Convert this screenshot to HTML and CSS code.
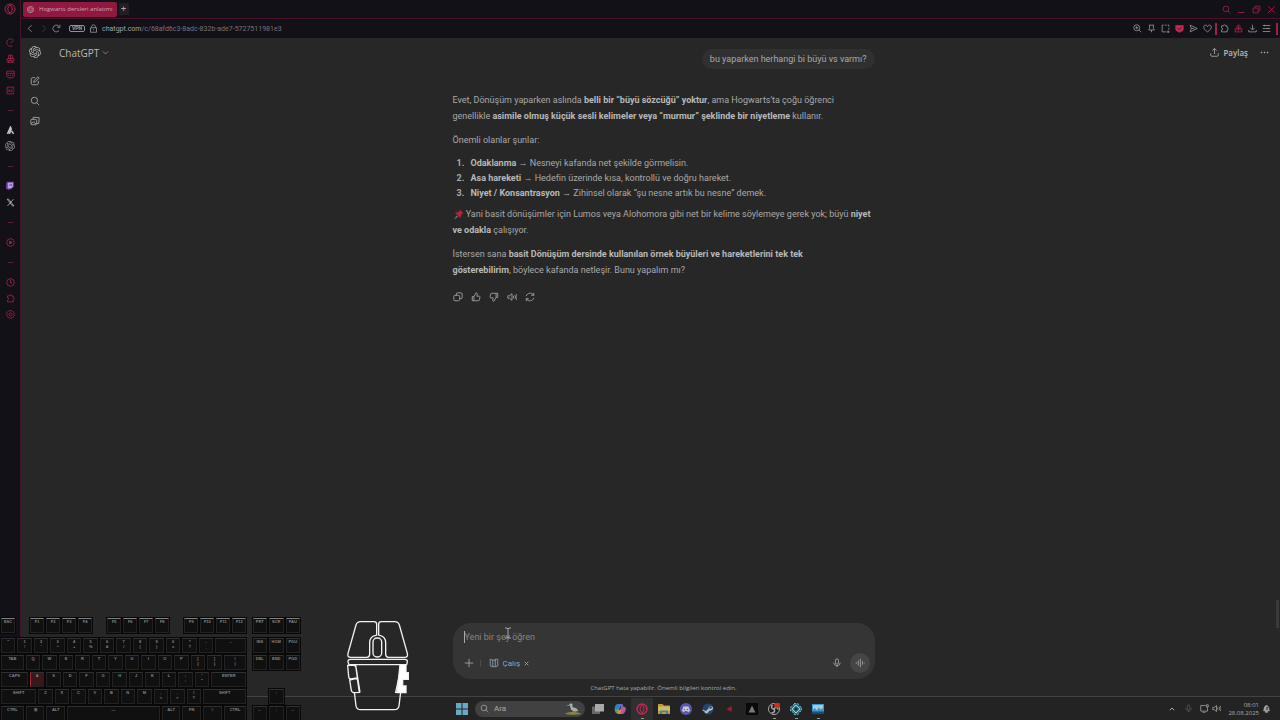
FILE: index.html
```
<!DOCTYPE html>
<html lang="tr">
<head>
  <meta charset="UTF-8">
  <meta name="viewport" content="width=device-width, initial-scale=1.0">
  <title>Hogwarts dersleri anlatımı</title>
  <link rel="stylesheet" href="styles.css">
</head>
<body>
  <!-- Shared icons -->
  <svg class="sprite" aria-hidden="true">
    <symbol id="gpt" viewBox="0 0 24 24"><path fill="currentColor" stroke="none" d="M22.2819 9.8211a5.9847 5.9847 0 0 0-.5157-4.9108 6.0462 6.0462 0 0 0-6.5098-2.9A6.0651 6.0651 0 0 0 4.9807 4.1818a5.9847 5.9847 0 0 0-3.9977 2.9 6.0462 6.0462 0 0 0 .7427 7.0966 5.98 5.98 0 0 0 .511 4.9107 6.051 6.051 0 0 0 6.5146 2.9001A5.9847 5.9847 0 0 0 13.2599 24a6.0557 6.0557 0 0 0 5.7718-4.2058 5.9894 5.9894 0 0 0 3.9977-2.9001 6.0557 6.0557 0 0 0-.7475-7.0729zm-9.022 12.6081a4.4755 4.4755 0 0 1-2.8764-1.0408l.1419-.0804 4.7783-2.7582a.7948.7948 0 0 0 .3927-.6813v-6.7369l2.02 1.1686a.071.071 0 0 1 .038.052v5.5826a4.504 4.504 0 0 1-4.4945 4.4944zm-9.6607-4.1254a4.4708 4.4708 0 0 1-.5346-3.0137l.142.0852 4.783 2.7582a.7712.7712 0 0 0 .7806 0l5.8428-3.3685v2.3324a.0804.0804 0 0 1-.0332.0615L9.74 19.9502a4.4992 4.4992 0 0 1-6.1408-1.6464zM2.3408 7.8956a4.485 4.485 0 0 1 2.3655-1.9728V11.6a.7664.7664 0 0 0 .3879.6765l5.8144 3.3543-2.0201 1.1685a.0757.0757 0 0 1-.071 0l-4.8303-2.7865A4.504 4.504 0 0 1 2.3408 7.872zm16.5963 3.8558L13.1038 8.364 15.1192 7.2a.0757.0757 0 0 1 .071 0l4.8303 2.7913a4.4944 4.4944 0 0 1-.6765 8.1042v-5.6772a.79.79 0 0 0-.407-.667zm2.0107-3.0231l-.142-.0852-4.7735-2.7818a.7759.7759 0 0 0-.7854 0L9.409 9.2297V6.8974a.0662.0662 0 0 1 .0284-.0615l4.8303-2.7866a4.4992 4.4992 0 0 1 6.6802 4.66zM8.3065 12.863l-2.02-1.1638a.0804.0804 0 0 1-.038-.0567V6.0742a4.4992 4.4992 0 0 1 7.3757-3.4537l-.142.0805L8.704 5.459a.7948.7948 0 0 0-.3927.6813zm1.0976-2.3654l2.602-1.4998 2.6069 1.4998v2.9994l-2.5974 1.4997-2.6067-1.4997Z"/></symbol>
    <symbol id="opera" viewBox="0 0 24 24"><circle cx="12" cy="12" r="10"/><ellipse cx="12" cy="12" rx="4.500" ry="7.500"/></symbol>
    <symbol id="search" viewBox="0 0 24 24"><circle cx="10.500" cy="10.500" r="7.500"/><path d="M16 16l6 6"/></symbol>
    <symbol id="puzzle" viewBox="0 0 24 24"><path d="M4 5h5c0-4 6-4 6 0h4v5c4 0 4 6 0 6v5H4v-5c4 0 4-6 0-6z"/></symbol>
    <symbol id="mic" viewBox="0 0 24 24"><rect x="8.500" y="2" width="7" height="13" rx="3.500"/><path d="M4.500 11c0 10 15 10 15 0M12 18.500V22"/></symbol>
    <symbol id="speaker" viewBox="0 0 24 24"><path d="M2 9v6h4l6 5V4L6 9zM15.500 9v6M19 7.500c2 3 2 6 0 9M22 5c3 5 3 9 0 14"/></symbol>
    <symbol id="thumb" viewBox="0 0 24 24"><path d="M3 11h4v10H3zM7 11l5-9c3 0 3.500 2 3 4l-1 4h5c2 0 3 1 2.500 3l-1.500 6c-.500 1.500-1 2-3 2H7"/></symbol>
  </svg>

  <div class="browser">
    <nav class="opera-bar" aria-label="Opera">
      <a href="#" class="opera-logo"><svg class="icon-l"><use href="#opera"/></svg></a>
      <a href="#"><svg class="icon-s" viewBox="0 0 24 24"><path d="M17 21c-10 4-18-5-14-13 4-7 13-7 17-2M12 13l8-6"/></svg></a>
      <a href="#"><svg class="icon-s" viewBox="0 0 24 24"><path d="M7 12V3h10v9M3 12h18v6H3zM7 18v4M17 18v4M2 22h20M12 3v15"/></svg></a>
      <a href="#"><svg class="icon-s" viewBox="0 0 24 24"><path d="M2 3h20v13l-4 5H6l-4-5zM3 9h18M7 13v3M12 13v4M17 13v3"/></svg></a>
      <a href="#"><svg class="icon-s" viewBox="0 0 24 24"><path d="M20 9V3H3v18h17v-4M8 8v8l4-4 4 4V8M20 13h3"/></svg></a>
      <hr>
      <a href="#" class="tile"><svg class="icon-s" viewBox="0 0 24 24"><path d="M4 21L12 3l2 5-5 13M15 13l5 8" stroke-width="4"/></svg></a>
      <a href="#" class="grey"><svg class="icon-m"><use href="#gpt"/></svg></a>
      <hr>
      <a href="#"><svg class="icon-m filled" viewBox="0 0 24 24"><path fill="#7748b8" d="M5 2h16v12l-6 6h-4l-3 3v-3H3V6z"/><path fill="#b9a0d8" d="M7 4h12v9l-4 4h-3l-3 2v-2H7z"/><path fill="#6440a0" d="M11 7h2v5h-2zM15 7h2v5h-2z"/></svg></a>
      <a href="#" class="tile"><svg class="icon-s" viewBox="0 0 24 24"><path d="M3 3h4l14 18h-4zM20 3L4 21"/></svg></a>
      <hr>
      <a href="#"><svg class="icon-s" viewBox="0 0 24 24"><circle cx="12" cy="12" r="10"/><path d="M10 8v8l6-4z" fill="currentColor"/></svg></a>
      <hr>
      <a href="#"><svg class="icon-s" viewBox="0 0 24 24"><circle cx="12" cy="12" r="10"/><path d="M12 5v8h4"/></svg></a>
      <a href="#"><svg class="icon-s"><use href="#puzzle"/></svg></a>
      <a href="#"><svg class="icon-s" viewBox="0 0 24 24"><path d="M8 2h8l5 5 1 8-5 6-5 1-6-2-4-6V7z"/><circle cx="12" cy="12" r="4"/></svg></a>
    </nav>

    <div class="window">
      <div class="tab-bar">
        <a href="#" class="tab"><svg class="icon-xs"><use href="#gpt"/></svg>Hogwarts dersleri anlatımı</a>
        <button class="new-tab" aria-label="Yeni sekme">+</button>
        <div class="window-buttons">
          <button aria-label="Sekme ara"><svg class="icon-s"><use href="#search"/></svg></button>
          <button aria-label="Küçült"><svg class="icon-s" viewBox="0 0 24 24"><path d="M2 20h18"/></svg></button>
          <button aria-label="Pencere"><svg class="icon-s" viewBox="0 0 24 24"><path d="M3 8h13v13H3zM8 7V3h13v13h-4"/></svg></button>
          <button aria-label="Kapat"><svg class="icon-s" viewBox="0 0 24 24"><path d="M3 3l18 18M21 3L3 21"/></svg></button>
        </div>
      </div>

      <div class="address-bar">
        <button aria-label="Geri"><svg class="icon-s" viewBox="0 0 24 24"><path d="M15 3l-9 9 9 9"/></svg></button>
        <button class="off" aria-label="İleri"><svg class="icon-s" viewBox="0 0 24 24"><path d="M9 3l9 9-9 9"/></svg></button>
        <button aria-label="Yenile"><svg class="icon-s" viewBox="0 0 24 24"><path d="M19 17A9 9 0 1 1 19 7M21 2v7h-7"/></svg></button>
        <span class="vpn">VPN</span>
        <svg class="icon-s" viewBox="0 0 24 24"><path d="M4 10h16v12H4zM7 10V6c0-5 10-5 10 0v4M12 14v3"/></svg>
        <a href="#" class="url">chatgpt.com<span>/c/68afd6c3-8adc-832b-ade7-5727511981e3</span></a>
        <div class="extensions">
          <button aria-label="Yakınlaştır"><svg class="icon-s" viewBox="0 0 24 24"><circle cx="10" cy="10" r="8"/><path d="M16 16l6 6M10 6v8M6 10h8"/></svg></button>
          <button aria-label="Sabitle"><svg class="icon-s" viewBox="0 0 24 24"><path d="M5 3h14M7 3v9l-3 4h16l-3-4V3M12 16v6"/></svg></button>
          <button aria-label="Anlık görüntü"><svg class="icon-s" viewBox="0 0 24 24"><path d="M3 3h4M10 3h5M18 3h3v4M21 10v5M3 3v18h10M15 21h8M19 17v7"/></svg></button>
          <button class="red" aria-label="Koruma"><svg class="icon-s" viewBox="0 0 24 24"><path fill="currentColor" d="M2 4h20v10c0 4-6 6-10 8-4-2-10-4-10-8z"/><path stroke="#14131a" d="M7 11l4 4 6-6"/></svg></button>
          <button aria-label="Gönder"><svg class="icon-s" viewBox="0 0 24 24"><path d="M3 3l19 9-19 9 3-9zM6 12h8"/></svg></button>
          <button aria-label="Favori"><svg class="icon-s" viewBox="0 0 24 24"><path d="M12 21C4 15 2 12 2 8c0-6 8-7 10-1 2-6 10-5 10 1 0 4-2 7-10 13z"/></svg></button>
          <span class="bar"></span>
          <button aria-label="Uzantılar"><svg class="icon-s"><use href="#puzzle"/></svg></button>
          <button class="red" aria-label="Kilit"><svg class="icon-s" viewBox="0 0 24 24"><path d="M3 13h18v8H3zM8 12V5c0-3 8-3 8 0v7M12 6v12"/></svg></button>
          <button aria-label="İndirilenler"><svg class="icon-s" viewBox="0 0 24 24"><path d="M12 2v13M6 10l6 6 6-6M2 16v5h20v-5"/></svg></button>
          <button aria-label="Ayarlar"><svg class="icon-s" viewBox="0 0 24 24"><path d="M2 4h20M2 12h20M2 20h20M7 2v4M16 10v4"/></svg></button>
          <span class="bar"></span>
        </div>
      </div>

      <div class="page">
        <aside class="rail">
          <a href="#" aria-label="Ana sayfa"><svg class="icon-l"><use href="#gpt"/></svg></a>
          <a href="#" aria-label="Yeni sohbet"><svg class="icon-m" viewBox="0 0 24 24"><path d="M12 4H7c-3 0-4 1-4 4v9c0 3 1 4 4 4h9c3 0 4-1 4-4v-5M9 15l1-4 9-9 3 3-9 9z"/></svg></a>
          <a href="#" aria-label="Sohbet ara"><svg class="icon-m"><use href="#search"/></svg></a>
          <a href="#" aria-label="Kitaplık"><svg class="icon-m" viewBox="0 0 24 24"><rect x="2" y="8" width="14" height="13" rx="3"/><path d="M7 8l1-5 14 1-1 14h-5M3 19l5-5 7 6M11 12h1"/></svg></a>
        </aside>

        <main>
          <header>
            <button class="model">ChatGPT <svg class="icon-xs" viewBox="0 0 24 24"><path d="M3 8l9 9 9-9"/></svg></button>
            <button class="share"><svg class="icon-s" viewBox="0 0 24 24"><path d="M12 16V2M6 7l6-6 6 6M2 14v5c0 2 1 3 3 3h14c2 0 3-1 3-3v-5"/></svg>Paylaş</button>
            <button class="more" aria-label="Diğer"><svg class="icon-s" viewBox="0 0 24 24"><path fill="currentColor" d="M3 11h2v2H3zM11 11h2v2h-2zM19 11h2v2h-2z"/></svg></button>
          </header>

          <div class="thread">
            <p class="user-message">bu yaparken herhangi bi büyü vs varmı?</p>

            <article>
              <p>Evet, Dönüşüm yaparken aslında <strong>belli bir “büyü sözcüğü” yoktur</strong>, ama Hogwarts'ta çoğu öğrenci<br>genellikle <strong>asimile olmuş küçük sesli kelimeler veya “murmur” şeklinde bir niyetleme</strong> kullanır.</p>
              <p>Önemli olanlar şunlar:</p>
              <ol>
                <li><strong>Odaklanma</strong> → Nesneyi kafanda net şekilde görmelisin.</li>
                <li><strong>Asa hareketi</strong> → Hedefin üzerinde kısa, kontrollü ve doğru hareket.</li>
                <li><strong>Niyet / Konsantrasyon</strong> → Zihinsel olarak “şu nesne artık bu nesne” demek.</li>
              </ol>
              <p><svg class="pin" viewBox="0 0 24 24"><path fill="#777" d="M8 14l3 3-9 6z"/><path fill="#b52339" d="M15 1l8 8-3 1-3 5v5L4 8l6-1 5-3z"/></svg> Yani basit dönüşümler için Lumos veya Alohomora gibi net bir kelime söylemeye gerek yok; büyü <strong>niyet<br>ve odakla</strong> çalışıyor.</p>
              <p>İstersen sana <strong>basit Dönüşüm dersinde kullanılan örnek büyüleri ve hareketlerini tek tek<br>gösterebilirim</strong>, böylece kafanda netleşir. Bunu yapalım mı?</p>
            </article>

            <div class="actions">
              <button aria-label="Kopyala"><svg class="icon-m" viewBox="0 0 24 24"><rect x="2" y="8" width="14" height="13" rx="3"/><path d="M8 8V5c0-2 1-3 3-3h8c2 0 3 1 3 3v8c0 2-1 3-3 3h-3"/></svg></button>
              <button aria-label="Beğen"><svg class="icon-m"><use href="#thumb"/></svg></button>
              <button aria-label="Beğenme"><svg class="icon-m flip"><use href="#thumb"/></svg></button>
              <button aria-label="Sesli oku"><svg class="icon-m"><use href="#speaker"/></svg></button>
              <button aria-label="Yeniden dene"><svg class="icon-m" viewBox="0 0 24 24"><path d="M3 10c2-8 13-10 18-2M21 2v6h-6M21 14c-2 8-13 10-18 2M3 22v-6h6"/></svg></button>
            </div>
          </div>

          <form class="composer">
            <input type="text" placeholder="Yeni bir şey öğren" aria-label="Mesaj">
            <div class="tools">
              <button type="button" aria-label="Ekle"><svg class="icon-m" viewBox="0 0 24 24"><path d="M12 2v20M2 12h20"/></svg></button>
              <span class="divider"></span>
              <button type="button" class="study"><svg class="icon-m" viewBox="0 0 24 24"><path d="M9 5L3 3v16l6 2zM9 5h6v16H9M15 3h6v16l-6 2M15 3v4"/></svg>Çalış <svg class="cross" viewBox="0 0 24 24"><path d="M3 3l18 18M21 3L3 21"/></svg></button>
              <button type="button" class="dictate" aria-label="Dikte"><svg class="icon-m"><use href="#mic"/></svg></button>
              <button type="button" class="voice" aria-label="Sesli mod"><svg class="icon-m" viewBox="0 0 24 24"><path d="M3 10v4M8 6v12M13 2v20M18 8v8M22 11v2"/></svg></button>
            </div>
            <svg class="ibeam" viewBox="0 0 8 12"><path d="M1 1h2l1 1 1-1h2M4 2v8M1 11h2l1-1 1 1h2"/></svg>
          </form>
          <p class="disclaimer">ChatGPT hata yapabilir. Önemli bilgileri kontrol edin.</p>
        </main>
        <div class="scrollbar"><span></span></div>
      </div>
    </div>
  </div>

  <footer class="taskbar">
    <div class="apps">
      <button aria-label="Başlat"><svg class="app" viewBox="0 0 24 24"><path fill="#69a9c4" d="M0 0h11v11H0zM13 0h11v11H13zM0 13h11v11H0zM13 13h11v11H13z"/></svg></button>
      <label class="task-search">
        <svg class="icon-s"><use href="#search"/></svg>
        <input type="search" placeholder="Ara">
        <svg class="bird" viewBox="0 0 54 36"><path fill="#85863d" d="M2 32c12-7 38-7 50 0-12 4-38 4-50 0z"/><path fill="#a7adb0" d="M15 4c4-4 11-3 11 2l-1 6 12 4 6 8-12 2-10-6-3-12z"/><path fill="#b78038" d="M17 5L4 9l13 0z"/><path stroke="#a5843f" d="M27 24v8M32 25v7"/></svg>
      </label>
      <button aria-label="Görev görünümü"><svg class="app" viewBox="0 0 24 24"><path fill="#666" d="M0 7h16v15H0z"/><path fill="#aaa" d="M6 2h18v15H6z"/></svg></button>
      <button aria-label="Copilot"><svg class="app" viewBox="0 0 24 24"><path fill="#347fc5" d="M7 2h8l-5 13H3C-1 15 2 2 7 2z"/><path fill="#50a269" d="M2 12h8l-2 9C3 21 1 17 2 12z"/><path fill="#b956a8" d="M14 8h8c4 2 0 14-5 14H9z"/><path fill="#d39145" d="M8 14h7l-3 8H7z"/><path fill="#7464c8" d="M12 2h5l3 7h-6z"/></svg></button>
      <button class="current" aria-label="Opera GX"><svg class="app red" viewBox="0 0 24 24"><circle cx="12" cy="12" r="10" stroke-width="3"/><ellipse cx="12" cy="12" rx="4" ry="7"/></svg></button>
      <button aria-label="Dosya Gezgini"><svg class="app" viewBox="0 0 24 24"><path fill="#b99a3c" d="M0 2h9l3 3h12v17H0z"/><path fill="#d0bd62" d="M0 7h24v9H0z"/><path fill="#3e83b5" d="M4 15h16v7h-4v-4H8v4H4z"/></svg></button>
      <button aria-label="Discord"><svg class="app" viewBox="0 0 24 24"><circle cx="12" cy="12" r="12" fill="#5b58b5"/><path fill="#ccc" d="M7 7h10l3 9-4 2-2-2h-4l-2 2-4-2z"/><circle cx="9" cy="13" r="1.500" fill="#5b58b5"/><circle cx="15" cy="13" r="1.500" fill="#5b58b5"/></svg></button>
      <button aria-label="Steam"><svg class="app" viewBox="0 0 24 24"><circle cx="12" cy="12" r="11" fill="#24456b"/><path fill="#bbb" d="M1 13l7 3 5-5c0-7 10-6 9 0-1 4-5 4-8 5-2 6-8 6-9 1l-4-2z"/><circle cx="17" cy="9" r="2.500" fill="#24456b"/></svg></button>
      <button aria-label="Riot"><svg class="app" viewBox="0 0 24 24"><path stroke="#9c202c" stroke-width="3" d="M15 8l-7 4 7 4M10 12h6"/></svg></button>
      <button aria-label="Afterburner"><svg class="app" viewBox="0 0 24 24"><path fill="#09090b" d="M0 0h24v24H0z"/><path fill="#777" d="M12 5l7 14H5z"/></svg></button>
      <button class="open" aria-label="OBS"><svg class="app" viewBox="0 0 24 24"><circle cx="12" cy="12" r="11" stroke="#aaa" fill="#1a1a1a"/><path stroke="#aaa" stroke-width="3" d="M12 12c-6 0-6-5-3-8M12 12c3-5 8-3 8 1M12 12c3 5-1 9-5 7"/><circle cx="18" cy="4" r="6" fill="#cf2c1f"/></svg></button>
      <button class="open" aria-label="Kaplama"><svg class="app" viewBox="0 0 24 24"><path fill="#2f7484" d="M8 1h8l2 5 5 2v8l-5 2-2 5H8l-2-5-5-2V8l5-2z"/><path stroke="#a9cbd0" d="M12 4l8 8-8 8-8-8z"/><path stroke="#62b3c4" stroke-dasharray="4 3" d="M8 1h8l2 5 5 2v8l-5 2-2 5H8l-2-5-5-2V8l5-2z"/><circle cx="12" cy="12" r="3" fill="#172f39"/></svg></button>
      <button class="open" aria-label="Fotoğraflar"><svg class="app" viewBox="0 0 24 24"><path fill="#4094c8" d="M0 2h24v20H0z"/><path fill="#a4cbdc" d="M2 4h20v6l-5 3-3-4-5 6-3-5-4 3z"/><path fill="#174e73" d="M0 17h24v5H0z"/></svg></button>
    </div>
    <div class="tray">
      <svg class="icon-xs" viewBox="0 0 24 24"><path stroke-width="4" d="M3 17l9-9 9 9"/></svg>
      <svg class="icon-s dim"><use href="#mic"/></svg>
      <svg class="icon-s" viewBox="0 0 24 24"><path d="M15 4H2v15h18v-7M7 22h8M17 2h5v6h-5zM20 8v4"/></svg>
      <svg class="icon-s"><use href="#speaker"/></svg>
      <time datetime="2025-08-28T08:01">08:01<br>28.08.2025</time>
      <svg class="icon-s" viewBox="0 0 24 24"><path fill="currentColor" d="M4 18c3-3 0-12 8-14 8 2 5 11 8 14zM9 20h6v2H9z"/><path stroke="#222" d="M11 9h5l-5 5h5"/></svg>
    </div>
  </footer>

  <!-- Input overlay: keyboard -->
  <div class="keyboard" aria-hidden="true">
    <div class="function-row">
      <kbd>ESC</kbd>
      <div><kbd>F1</kbd><kbd>F2</kbd><kbd>F3</kbd><kbd>F4</kbd></div>
      <div><kbd>F5</kbd><kbd>F6</kbd><kbd>F7</kbd><kbd>F8</kbd></div>
      <div><kbd>F9</kbd><kbd>F10</kbd><kbd>F11</kbd><kbd>F12</kbd></div>
    </div>
    <kbd class="side-1 lit">PRT</kbd><kbd class="lit">SCR</kbd><kbd class="lit">PAU</kbd>

    <kbd>"</kbd><kbd>1<br>!</kbd><kbd>2<br>'</kbd><kbd>3<br>^</kbd><kbd>4<br>+</kbd><kbd>5<br>%</kbd><kbd>6<br>&amp;</kbd><kbd>7<br>/</kbd><kbd>8<br>(</kbd><kbd>9<br>)</kbd><kbd>0<br>=</kbd><kbd>*<br>?</kbd><kbd>-<br>_</kbd><kbd class="w8">←</kbd>
    <kbd class="side-1">INS</kbd><kbd>HOM</kbd><kbd>PGU</kbd>

    <kbd class="w6">TAB</kbd><kbd>Q</kbd><kbd>W</kbd><kbd>E</kbd><kbd>R</kbd><kbd>T</kbd><kbd>Y</kbd><kbd>U</kbd><kbd>I</kbd><kbd>O</kbd><kbd>P</kbd><kbd>[<br>{</kbd><kbd>]<br>}</kbd><kbd class="w6">\<br>|</kbd>
    <kbd class="side-1">DEL</kbd><kbd>END</kbd><kbd>PGD</kbd>

    <kbd class="w7">CAPS</kbd><kbd class="pressed">A</kbd><kbd>S</kbd><kbd>D</kbd><kbd>F</kbd><kbd>G</kbd><kbd>H</kbd><kbd>J</kbd><kbd>K</kbd><kbd>L</kbd><kbd>;<br>:</kbd><kbd>'<br>"</kbd><kbd class="w9">ENTER</kbd>

    <kbd class="w9 row-start">SHIFT</kbd><kbd>Z</kbd><kbd>X</kbd><kbd>C</kbd><kbd>V</kbd><kbd>B</kbd><kbd>N</kbd><kbd>M</kbd><kbd>,<br>&lt;</kbd><kbd>.<br>&gt;</kbd><kbd>/<br>?</kbd><kbd class="w11">SHIFT</kbd>
    <kbd class="side-2">↑</kbd>

    <kbd class="w6 row-start">CTRL</kbd><kbd class="w5">⊞</kbd><kbd class="w5">ALT</kbd><kbd class="w23">—</kbd><kbd class="w5">ALT</kbd><kbd class="w5">FN</kbd><kbd class="w5">≡</kbd><kbd class="w6">CTRL</kbd>
    <kbd class="side-1">←</kbd><kbd>↓</kbd><kbd>→</kbd>
  </div>

  <!-- Input overlay: mouse -->
  <svg class="mouse" viewBox="0 0 300 330" aria-hidden="true">
    <path d="M140 75V43q0-8-8-8H92q-11 0-14 10L54 130q-3 12 8 12h48q9 0 9-9v-35q0-18 18-22zM146 75V43q0-8 8-8h40q11 0 14 10l24 85q3 12-8 12h-48q-9 0-9-9v-35q0-18-18-22z"/>
    <rect x="129" y="84" width="26" height="57" rx="12"/>
    <path d="M62 148h162q9 0 8 8l-2 8H57l-3-8q-1-8 8-8zM73 246l5 42q2 11 14 11h101q12 0 14-11l5-42M215 163l-18 84h14"/>
    <path d="M53 166h18q6 0 7 7l4 31-20 3q-5 0-6-7zM59 210l18-4q5 0 6 6l5 35-15 1q-7 0-9-7zM77 165l13 82"/>
    <path class="solid" d="M210 164h18v24h7v20h-17v20h10v20h-27l3-24z"/>
  </svg>
</body>
</html>
```
FILE: styles.css
```
* {
  box-sizing: border-box;
}

body {
  margin: 0;
  height: 100vh;
  display: flex;
  flex-direction: column;
  position: relative;
  overflow: hidden;
  background: #272727;
  color: #a9a9a9;
  font-family: Roboto, "Noto Sans", sans-serif;
  font-size: 9px;
}

p {
  margin: 0;
}

a {
  color: inherit;
  text-decoration: none;
}

button,
input {
  font: inherit;
  color: inherit;
  background: none;
  border: 0;
  padding: 0;
  outline: none;
}

button {
  display: flex;
  align-items: center;
  justify-content: center;
}

svg {
  display: block;
  flex: none;
  fill: none;
  stroke: currentColor;
  stroke-width: 2;
}

.sprite {
  position: absolute;
  width: 0;
  height: 0;
}

.filled {
  stroke: none;
}

.icon-xs {
  width: 7px;
  height: 7px;
}

.icon-s {
  width: 9px;
  height: 9px;
}

.icon-m {
  width: 10px;
  height: 10px;
}

.icon-l {
  width: 12px;
  height: 12px;
}

.red {
  color: #c92653;
}

.browser {
  flex: 1;
  min-height: 0;
  display: flex;
}

/* Opera sidebar */
.opera-bar {
  width: 21px;
  display: flex;
  flex-direction: column;
  background: #121117;
  border-right: 1px solid #45142a;
  color: #b0254e;
}

.opera-bar a {
  height: 16px;
  display: flex;
  align-items: center;
  justify-content: center;
}

.opera-bar .opera-logo {
  height: 18px;
  margin-bottom: 16px;
}

.opera-bar hr {
  width: 5px;
  margin: 12px auto 11px;
  border: 0;
  border-top: 1px solid #651d36;
}

.opera-bar .tile {
  color: #c4c4c4;
}

.opera-bar .grey {
  color: #929292;
}

.window {
  flex: 1;
  min-width: 0;
  display: flex;
  flex-direction: column;
}

.tab-bar {
  height: 19px;
  display: flex;
  align-items: center;
  padding: 0 4px 0 2px;
  background: #121117;
  border-bottom: 1px solid #45142a;
}

.tab {
  height: 15px;
  display: flex;
  align-items: center;
  gap: 5px;
  padding: 0 4px;
  border-radius: 2px;
  background: #901941;
  color: #c7a5b0;
  font-family: "Open Sans", sans-serif;
  font-size: 6px;
  white-space: nowrap;
}

.new-tab {
  width: 10px;
  height: 12px;
  margin-left: 2px;
  background: #202024;
}

.window-buttons {
  display: flex;
  gap: 6px;
  margin-left: auto;
  color: #b02050;
}

.address-bar {
  height: 19px;
  display: flex;
  align-items: center;
  gap: 4px;
  padding: 0 2px 0 5px;
  background: #121117;
  color: #a2a2a2;
}

.off {
  color: #45454b;
}

.vpn {
  margin-left: 4px;
  padding: 0 2px;
  border: 1px solid #929292;
  border-radius: 2px;
  font-size: 5px;
  font-weight: 700;
  line-height: 5px;
}

.url {
  font-size: 7px;
}

.url span {
  color: #77717e;
}

.extensions {
  display: flex;
  align-items: center;
  gap: 5px;
  margin-left: auto;
}

.extensions .bar {
  margin: 0 -2px;
}

.extensions .bar:last-child {
  margin: 0;
}

.bar {
  width: 2px;
  height: 12px;
  background: #a12145;
}

/* ChatGPT page */
.page {
  flex: 1;
  min-height: 0;
  display: flex;
}

.rail {
  width: 30px;
  display: flex;
  flex-direction: column;
  align-items: center;
  gap: 10px;
  padding: 8px 2px 0 0;
  color: #b0b0b0;
}

.rail a:first-child {
  margin-bottom: 8px;
}

main {
  flex: 1;
  min-width: 0;
  position: relative;
  display: flex;
  flex-direction: column;
  align-items: center;
}

header {
  position: absolute;
  top: 0;
  left: 0;
  right: 0;
  height: 29px;
  display: flex;
  align-items: center;
  gap: 12px;
  padding: 0 7px 0 8px;
  color: #b8b8b8;
}

.model {
  gap: 3px;
  font-family: "Open Sans", sans-serif;
  font-size: 10px;
}

.share {
  gap: 4px;
  margin-left: auto;
  font-family: "Open Sans", sans-serif;
  font-size: 8px;
  font-weight: 600;
}

.thread {
  flex: 1;
  width: 100%;
  max-width: 422px;
  display: flex;
  flex-direction: column;
  padding-top: 11px;
}

.user-message {
  align-self: flex-end;
  padding: 2px 8px;
  border-radius: 10px;
  background: #303030;
  line-height: 16px;
}

article {
  display: flex;
  flex-direction: column;
  gap: 8px;
  margin-top: 23px;
  line-height: 16px;
}

article strong {
  font-weight: 700;
  color: #b8b8b8;
}

ol {
  margin: 0 0 -3px;
  padding-left: 14px;
  line-height: 15px;
}

li {
  padding-left: 4px;
}

li::marker {
  font-weight: 700;
}

.pin {
  display: inline-block;
  width: 11px;
  height: 11px;
  vertical-align: middle;
  stroke: none;
}

.actions {
  display: flex;
  gap: 8px;
  margin-top: 14px;
}

.flip {
  transform: rotate(180deg);
}

.composer {
  position: relative;
  width: 100%;
  max-width: 422px;
  height: 56px;
  padding: 8px 5px 5px 11px;
  border-radius: 18px;
  background: #353535;
}

.composer input {
  display: block;
  width: 100%;
  height: 12px;
  border-left: 1px solid #aaa;
}

.composer input::placeholder {
  color: #858585;
  opacity: 1;
}

.tools {
  display: flex;
  align-items: center;
  height: 20px;
  margin-top: 10px;
}

.divider {
  width: 1px;
  height: 7px;
  margin: 0 8px 0 6px;
  background: #4c4c4c;
}

.study {
  gap: 4px;
  color: #91a5b0;
  font-size: 8px;
}

.cross {
  width: 5px;
  height: 5px;
  stroke-width: 4;
}

.dictate {
  margin-left: auto;
}

.voice {
  width: 20px;
  height: 20px;
  margin-left: 8px;
  border-radius: 50%;
  background: #454545;
}

.ibeam {
  position: absolute;
  left: 51px;
  top: 4px;
  width: 8px;
  height: 12px;
  stroke-width: 1;
}

.disclaimer {
  padding: 5px 0 4px;
  font-family: "Open Sans", sans-serif;
  font-size: 6px;
  line-height: 8px;
}

.scrollbar {
  width: 4px;
  display: flex;
  align-items: flex-end;
  padding-bottom: 68px;
}

.scrollbar span {
  width: 3px;
  height: 28px;
  background: #3a3a3a;
}

/* Windows taskbar */
.taskbar {
  height: 24px;
  display: grid;
  grid-template-columns: 1fr auto 1fr;
  align-items: center;
  background: #232323;
  border-top: 1px solid #434343;
}

.apps {
  grid-column: 2;
  display: flex;
  align-items: center;
}

.apps button {
  width: 22px;
  height: 22px;
  position: relative;
}

.app {
  width: 12px;
  height: 12px;
  stroke: none;
}

.app.red {
  stroke: currentColor;
}

.apps .current {
  background: #303030;
}

.current::after,
.open::after {
  content: "";
  position: absolute;
  bottom: 1px;
  width: 3px;
  height: 1px;
  background: #999;
}

.task-search {
  width: 110px;
  height: 16px;
  margin: 0 2px;
  display: flex;
  align-items: center;
  gap: 5px;
  padding: 0 3px 0 5px;
  border-radius: 8px;
  background: #414141;
}

.task-search input {
  flex: 1;
  min-width: 0;
  font-size: 8px;
}

.task-search input::placeholder {
  color: #aaa;
  opacity: 1;
}

.bird {
  width: 18px;
  height: 12px;
  stroke: none;
}

.tray {
  display: flex;
  align-items: center;
  justify-content: flex-end;
  gap: 3px;
  padding-right: 9px;
}

.tray .icon-xs {
  width: 6px;
  height: 6px;
  margin-right: 6px;
}

.tray .dim {
  margin-right: 4px;
  color: #595959;
}

.tray time {
  margin-left: 4px;
  font-family: "Open Sans", sans-serif;
  font-size: 6px;
  line-height: 8px;
  text-align: right;
}

/* Keyboard and mouse overlays sit over the desktop */
.keyboard {
  position: absolute;
  left: 0;
  bottom: -3px;
  width: 301px;
  display: grid;
  grid-template-columns: repeat(73, 1fr);
  grid-template-rows: 20px repeat(5, 17px);
}

.keyboard kbd {
  grid-column-end: span 4;
  height: 15px;
  margin: 0 1px;
  border: 1px solid #222;
  border-top-color: #303030;
  outline: 1px solid #080808;
  background: #101010;
  color: #858585;
  font-family: "Liberation Sans", sans-serif;
  font-size: 4px;
  font-weight: 700;
  line-height: 5px;
  text-align: center;
  overflow: hidden;
}

.function-row {
  grid-column: 1 / span 60;
  display: flex;
  justify-content: space-between;
}

.function-row div {
  display: flex;
}

.keyboard .function-row kbd {
  width: 14px;
  border-top-color: #828282;
}

.keyboard .lit {
  border-top-color: #828282;
}

.function-row div kbd {
  flex: none;
}

.keyboard .w5 { grid-column-end: span 5; }
.keyboard .w6 { grid-column-end: span 6; }
.keyboard .w7 { grid-column-end: span 7; }
.keyboard .w8 { grid-column-end: span 8; }
.keyboard .w9 { grid-column-end: span 9; }
.keyboard .w11 { grid-column-end: span 11; }
.keyboard .w23 { grid-column-end: span 23; }
.keyboard .side-1 { grid-column-start: 62; }
.keyboard .side-2 { grid-column-start: 66; }
.keyboard .row-start { grid-column-start: 1; }

.keyboard .pressed {
  background: #3a171b;
  border-left-color: #a52b34;
}

.mouse {
  position: absolute;
  left: 330px;
  bottom: 0;
  width: 100px;
  height: 110px;
  stroke: #f2f2f2;
  stroke-width: 4;
}

.mouse .solid {
  fill: #fff;
}
```
